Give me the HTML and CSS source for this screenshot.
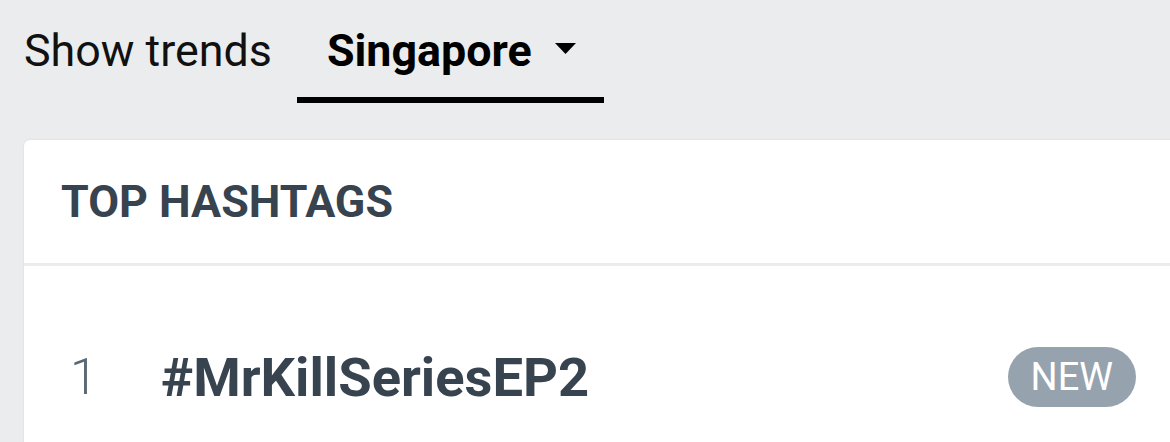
FILE: index.html
```html
<!DOCTYPE html>
<html lang="en">
<head>
<meta charset="utf-8">
<title>Trends</title>
<link rel="stylesheet" href="styles.css">
</head>
<body>
  <div class="topbar">
    <span class="label">Show trends</span>
    <div class="tab">
      <span class="tab-text">Singapore</span>
      <svg class="caret" width="21" height="11" viewBox="0 0 21 11"><path d="M0 0 H21 L10.5 11 Z" fill="#000"/></svg>
    </div>
  </div>
  <div class="card">
    <div class="card-header">TOP HASHTAGS</div>
    <div class="list">
      <div class="row">
        <span class="rank">1</span>
        <span class="tag">#MrKillSeriesEP2</span>
        <span class="badge">NEW</span>
      </div>
    </div>
  </div>
</body>
</html>
```

FILE: styles.css
```css
html, body {
  margin: 0;
  padding: 0;
}
body {
  background: #ebecee;
  font-family: Roboto, "Liberation Sans", sans-serif;
  width: 1170px;
  height: 442px;
  overflow: hidden;
}
.topbar {
  display: flex;
  align-items: flex-end;
  padding-left: 24px;
  height: 103px;
  gap: 25px;
}
.label {
  font-size: 44.8px;
  line-height: 52px;
  color: #111;
  padding-bottom: 26px;
}
.tab {
  display: flex;
  align-items: center;
  padding: 0 28px 20px 30px;
  border-bottom: 6px solid #000;
  gap: 23px;
}
.tab-text {
  font-size: 44.8px;
  font-weight: 700;
  line-height: 52px;
  color: #000;
}
.caret {
  display: block;
  margin-top: -6px;
}
.card {
  margin: 37px 0 0 24px;
  width: 1160px;
  background: #fff;
  border-radius: 6px 6px 0 0;
  box-shadow: 0 0 3px rgba(0, 0, 0, 0.08);
  height: 320px;
}
.card-header {
  height: 123px;
  display: flex;
  align-items: center;
  padding-left: 37px;
  font-size: 44.8px;
  font-weight: 700;
  color: #37434e;
  border-bottom: 3px solid #ebecee;
}
.list {
  padding-top: 51px;
}
.row {
  display: flex;
  align-items: center;
  height: 120px;
  padding: 0 48px 0 46px;
}
.rank {
  width: 91px;
  font-size: 50px;
  font-weight: 300;
  color: #5b6873;
}
.tag {
  font-size: 54.3px;
  font-weight: 700;
  color: #37434e;
}
.badge {
  margin-left: auto;
  height: 60px;
  padding: 0 23px;
  border-radius: 30px;
  background: #96a3ae;
  color: #fff;
  font-size: 38px;
  line-height: 60px;
}
```
